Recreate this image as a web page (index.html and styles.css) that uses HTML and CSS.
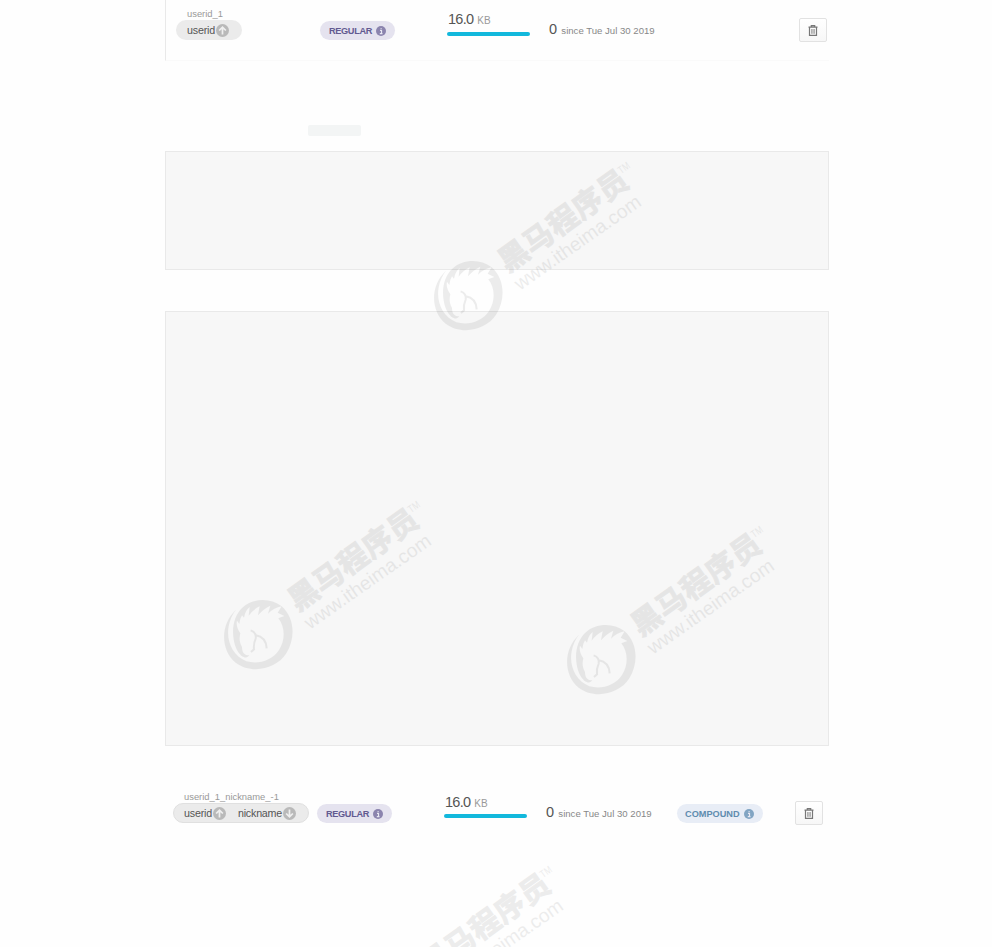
FILE: index.html
```html
<!DOCTYPE html>
<html lang="en">
<head>
<meta charset="utf-8">
<title>Indexes</title>
<link rel="stylesheet" href="styles.css">
</head>
<body>
<svg class="defs" aria-hidden="true">
  <symbol id="info" viewBox="0 0 10 10"><circle cx="5" cy="5" r="5" fill="currentColor"/><path d="M4 4.3H5.5V7.5M3.8 7.7H6.5M4.6 2.5H5.6" fill="none" stroke="#e8e8f2" stroke-width="1.2"/></symbol>
  <symbol id="arrow" viewBox="0 0 12 12"><circle cx="6" cy="6" r="6" fill="#b9b9b9"/><path d="M6 9.7V3M2.9 6L6 2.9L9.1 6" fill="none" stroke="#efefef" stroke-width="1.6"/></symbol>
  <symbol id="trash" viewBox="0 0 10 11"><path d="M3.3 1.7V.7H6.7V1.7M.5 2.2H9.5M1.5 2.5V10.3H8.5V2.5" fill="none" stroke="#777" stroke-width="1.2"/><path d="M3.7 4V8.8M5 4V8.8M6.3 4V8.8" stroke="#888" stroke-width=".8"/></symbol>
  <symbol id="mark" viewBox="0 0 720 600" overflow="visible">
    <path d="M78 392C30 436 31 514 77 551C122 585 196 574 229 523C256 480 256 417 214 381C181 355 127 357 97 386C73 408 65 446 71 481C75 506 84 521 94 530C105 538 113 536 118 529C103 530 96 520 96 504C87 487 88 475 91 463C82 450 78 437 81 425L88 435Q89 420 96 409L102 416Q105 395 119 384L116 410Q130 391 149 382L144 409Q161 389 181 380L174 404Q192 386 215 382L203 401L223 411L205 418C226 444 226 484 207 513C186 545 145 557 109 547C67 529 48 485 56 442Q61 413 78 392Z"/>
    <path class="line" d="M122 454Q140 460 137 479Q130 494 132 511L123 519M137 469Q168 474 170 508"/>
    <g transform="translate(263 399) rotate(-35.5)">
      <text class="cn" x="0" y="0" textLength="453">黑马程序员</text>
      <text class="tm" x="449" y="-44" textLength="36" lengthAdjust="spacingAndGlyphs">TM</text>
    </g>
    <text class="url" transform="translate(300 452) rotate(-35)" textLength="449" lengthAdjust="spacingAndGlyphs">www.itheima.com</text>
  </symbol>
</svg>
<main class="page">
  <section class="row first">
    <div class="name"><div class="title">userid_1</div>
      <div class="keys"><span>userid</span><svg class="arrow"><use href="#arrow"/></svg></div></div>
    <div class="badge regular"><span>REGULAR</span><svg class="info"><use href="#info"/></svg></div>
    <div class="size"><span class="num">16.0</span><span class="unit">KB</span><div class="bar"></div></div>
    <div class="usage"><span class="num">0</span><span class="since">since Tue Jul 30 2019</span></div>
    <div></div>
    <button class="delete" aria-label="Delete"><svg class="trash"><use href="#trash"/></svg></button>
  </section>
  <div class="chip"></div>
  <div class="panel small"></div>
  <div class="panel large"></div>
  <section class="row second">
    <div class="name"><div class="title">userid_1_nickname_-1</div>
      <div class="keys outlined"><span>userid</span><svg class="arrow"><use href="#arrow"/></svg><span class="next">nickname</span><svg class="arrow down"><use href="#arrow"/></svg></div></div>
    <div class="badge regular"><span>REGULAR</span><svg class="info"><use href="#info"/></svg></div>
    <div class="size"><span class="num">16.0</span><span class="unit">KB</span><div class="bar"></div></div>
    <div class="usage"><span class="num">0</span><span class="since">since Tue Jul 30 2019</span></div>
    <div class="badge compound"><span>COMPOUND</span><svg class="info"><use href="#info"/></svg></div>
    <button class="delete" aria-label="Delete"><svg class="trash"><use href="#trash"/></svg></button>
  </section>
  <svg class="mark m1"><use href="#mark"/></svg>
  <svg class="mark m2"><use href="#mark"/></svg>
  <svg class="mark m3"><use href="#mark"/></svg>
  <svg class="mark m4"><use href="#mark"/></svg>
</main>
</body>
</html>
```
FILE: styles.css
```css
* { box-sizing: border-box; }
body { margin: 0; background: #fefefe; font-family: "Liberation Sans", Arial, sans-serif; color: #555; }
.defs { position: absolute; width: 0; height: 0; }
.page { position: relative; width: 992px; height: 947px; overflow: hidden; padding-left: 165px; }
.row { display: grid; grid-template-columns: 144px 127px 102px 130px 120px 28px; height: 61px; width: 664px; padding-left: 10px; border-left: 1px solid #e9e9e9; white-space: nowrap; }
.first { border-bottom: 1px solid #fafafa; }
.second { margin: 37px 0 0 -3px; border-color: transparent; }
.title { height: 20px; padding: 8px 0 0 11px; font-size: 9.4px; line-height: 12px; color: #999; }
.keys { display: inline-flex; align-items: center; height: 20px; padding: 0 13px 0 11px; border-radius: 10px; background: #ebebeb; font-size: 10.7px; letter-spacing: -.2px; }
.outlined { border: 1px solid #e0e0e0; padding: 0 12px 0 10px; }
.arrow { width: 13px; height: 13px; margin-left: 1px; }
.down { transform: rotate(180deg); }
.next { margin-left: 12px; }
.badge { display: flex; align-items: center; width: 75px; height: 19px; margin-top: 21px; padding-left: 9px; border-radius: 10px; font-size: 9.2px; font-weight: bold; }
.regular { background: #e5e3ef; color: #625a91; letter-spacing: -.35px; }
.regular .info { color: #8b84ae; }
.compound { width: 86px; margin-left: 1px; padding-left: 8px; background: #e8edf6; color: #5f8caf; letter-spacing: 0; }
.compound .info { color: #82a5c3; }
.info { width: 10px; height: 10px; margin-left: 4px; }
.size { padding-top: 11px; line-height: 16px; }
.num { font-size: 14.5px; letter-spacing: -.75px; color: #555; }
.size .num { margin-left: 1px; }
.unit { margin-left: 4px; font-size: 10px; color: #999; }
.bar { width: 83px; height: 4px; margin-top: 3px; border-radius: 2px; background: #12b8dc; }
.second .bar { margin-top: 2px; }
.second .num + .unit { margin-left: 4px; }
.usage { padding: 20px 0 0 0; line-height: 17px; }
.since { margin-left: 5px; font-size: 9.6px; color: #888; }
.delete { display: grid; place-items: center; width: 28px; height: 24px; margin-top: 18px; padding: 0; border: 1px solid #e2e2e2; border-radius: 2px; background: linear-gradient(#fff, #f7f7f7); }
.second .delete { margin-left: -1px; }
.trash { width: 10px; height: 11px; }
.chip { width: 53px; height: 11px; margin: 64px 0 0 143px; border-radius: 2px; background: #f3f5f5; }
.panel { width: 664px; border: 1px solid #e9e9e9; background: #f7f7f7; }
.small { height: 119px; margin-top: 15px; }
.large { height: 435px; margin-top: 41px; }
.mark { position: absolute; width: 240px; height: 200px; overflow: visible; opacity: .065; }
.m1 { left: 420px; top: 140px; }
.m2 { left: 210px; top: 479px; }
.m3 { left: 553px; top: 504px; }
.m4 { left: 342px; top: 844px; }
.cn { font: bold 89px "Noto Sans CJK SC", sans-serif; stroke: #000; stroke-width: 3; }
.tm { font-size: 32px; }
.url { font-size: 58px; }
.line { fill: none; stroke: #000; stroke-width: 6; }
```
